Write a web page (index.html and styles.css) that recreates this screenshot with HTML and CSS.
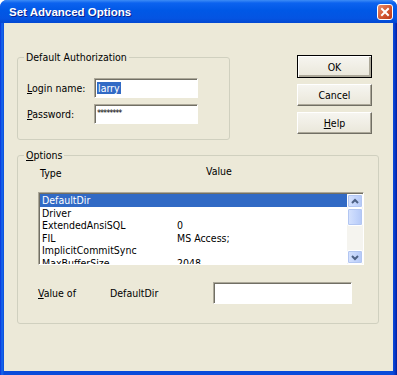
FILE: index.html
```html
<!DOCTYPE html>
<html lang="en">
<head>
  <meta charset="UTF-8" />
  <title>Set Advanced Options</title>
  <link rel="stylesheet" href="styles.css">
</head>
<body>
  <div class="window">
    <div class="titlebar">
      <span class="title">Set Advanced Options</span>
      <span class="close">
        <svg width="14" height="14" viewBox="0 0 14 14">
          <path d="M4 4 L10 10 M10 4 L4 10" stroke="#fff" stroke-width="2" stroke-linecap="square" fill="none"/>
        </svg>
      </span>
    </div>

    <div class="client">
      <div class="top">
        <fieldset class="group auth">
          <legend>Default Authorization</legend>
          <div class="group-body">
            <div class="field">
              <label><u>L</u>ogin name:</label>
              <span class="edit"><span class="sel">larry</span></span>
            </div>
            <div class="field">
              <label><u>P</u>assword:</label>
              <span class="edit mask">********</span>
            </div>
          </div>
        </fieldset>

        <div class="buttons">
          <button class="btn default">OK</button>
          <button class="btn">Cancel</button>
          <button class="btn"><u>H</u>elp</button>
        </div>
      </div>

      <fieldset class="group options">
        <legend><u>O</u>ptions</legend>
        <div class="group-body">
          <div class="cols">
            <span class="col-type">Type</span>
            <span class="col-value">Value</span>
          </div>

          <div class="list">
            <div class="rows">
              <div class="row selected"><span class="c1">DefaultDir</span><span></span></div>
              <div class="row"><span class="c1">Driver</span><span></span></div>
              <div class="row"><span class="c1">ExtendedAnsiSQL</span><span>0</span></div>
              <div class="row"><span class="c1">FIL</span><span>MS Access;</span></div>
              <div class="row"><span class="c1">ImplicitCommitSync</span><span></span></div>
              <div class="row"><span class="c1">MaxBufferSize</span><span>2048</span></div>
            </div>
            <div class="scrollbar">
              <span class="sb-btn">
                <svg width="14" height="13" viewBox="0 0 14 13"><path d="M4 8 L7 5 L10 8" stroke="#4D6185" stroke-width="2" fill="none"/></svg>
              </span>
              <span class="sb-thumb"></span>
              <span class="sb-track"></span>
              <span class="sb-btn">
                <svg width="14" height="13" viewBox="0 0 14 13"><path d="M4 5 L7 8 L10 5" stroke="#4D6185" stroke-width="2" fill="none"/></svg>
              </span>
            </div>
          </div>

          <div class="valueof">
            <label class="vo-label"><u>V</u>alue of</label>
            <span class="vo-name">DefaultDir</span>
            <span class="edit vo-edit"></span>
          </div>
        </div>
      </fieldset>
    </div>
  </div>
</body>
</html>
```

FILE: styles.css
```css
* {
  margin: 0;
  padding: 0;
  box-sizing: border-box;
}

body {
  font-family: "DejaVu Sans Condensed", "Liberation Sans", sans-serif;
  font-size: 10.5px;
  color: #000;
  background: #fff;
}

.window {
  width: 397px;
  height: 375px;
  display: flex;
  flex-direction: column;
  background: linear-gradient(to right, #0831D9 0, #166AEE 2px, #0A4BDA 4px, #0A4BDA 393px, #0838C8 395px, #001EA0 397px);
  border-radius: 7px 7px 0 0;
  overflow: hidden;
}

.titlebar {
  height: 23px;
  display: flex;
  align-items: center;
  justify-content: space-between;
  padding: 0 4px 0 9px;
  background: linear-gradient(#3D8CF6 0, #0C63EF 3px, #0058E6 45%, #0454E2 80%, #0348D2 100%);
}

.title {
  color: #fff;
  font-family: "Liberation Sans", sans-serif;
  font-weight: bold;
  font-size: 11.5px;
  text-shadow: 1px 1px #0A1E8C;
}

.close {
  width: 16px;
  height: 16px;
  display: flex;
  align-items: center;
  justify-content: center;
  border: 1px solid #fff;
  border-radius: 3px;
  background: linear-gradient(135deg, #E98D6D, #D2552F 55%, #B8381A);
}

.client {
  flex: 1;
  margin: 0 4px 4px;
  padding-left: 13px;
  background: #ECE9D8;
}

.top {
  display: flex;
  align-items: flex-start;
}

.group {
  border: 1px solid #D0D0BF;
  border-radius: 3px;
  padding: 0;
}

.group legend {
  margin-left: 6px;
  padding: 0 2px;
  line-height: 13px;
}

.auth {
  margin-top: 28px;
  width: 213px;
  height: 89px;
}

.auth .group-body {
  padding: 14px 9px 0;
  display: flex;
  flex-direction: column;
  gap: 6px;
}

.field {
  display: flex;
  align-items: center;
}

.field label {
  width: 67px;
}

.edit {
  display: block;
  background: #fff;
  border: 1px solid;
  border-color: #ACA899 #fff #fff #ACA899;
  box-shadow: inset 1px 1px #716F64;
}

.field .edit {
  width: 104px;
  height: 20px;
  padding: 2px 0 0 2px;
  line-height: 14px;
}

.sel {
  background: #316AC5;
  color: #fff;
  padding: 0 1px;
}

.field .mask {
  font-size: 9px;
  letter-spacing: -1px;
  padding-top: 1px;
}

.buttons {
  margin: 32px 0 0 67px;
  display: flex;
  flex-direction: column;
  gap: 6px;
}

.btn {
  width: 75px;
  height: 22px;
  font-family: inherit;
  font-size: 10.5px;
  color: #000;
  background: linear-gradient(#F6F5F0, #EAE7DA);
  border: 1px solid;
  border-color: #fff #716F64 #716F64 #fff;
  box-shadow: inset -1px -1px #ACA899;
}

.btn.default {
  height: 23px;
  border-color: #000;
  box-shadow: inset 1px 1px #fff, inset -2px -2px #ACA899;
}

.options {
  margin-top: 9px;
  width: 362px;
  height: 175px;
}

.options .group-body {
  padding: 5px 14px 0 20px;
}

.cols {
  display: flex;
  height: 13px;
  line-height: 13px;
}

.col-type {
  width: 168px;
  padding-left: 2px;
}

.col-value {
  margin-top: -2px;
}

.list {
  margin-top: 12px;
  width: 326px;
  height: 73px;
  display: flex;
  background: #fff;
  border: 1px solid;
  border-color: #ACA899 #fff #fff #ACA899;
  box-shadow: inset 1px 1px #716F64;
  padding: 1px 0 0 1px;
}

.rows {
  flex: 1;
  overflow: hidden;
}

.row {
  display: flex;
  height: 12.5px;
  line-height: 12.5px;
  white-space: nowrap;
}

.row .c1 {
  width: 137px;
  padding-left: 2px;
}

.row.selected {
  background: #316AC5;
  color: #fff;
}

.scrollbar {
  width: 16px;
  display: flex;
  flex-direction: column;
  background: #F5F4EF;
}

.sb-btn,
.sb-thumb {
  display: flex;
  align-items: center;
  justify-content: center;
  border: 1px solid #fff;
  border-radius: 2px;
  background: linear-gradient(to right, #D6E2FD, #C1D3FB 60%, #B4C8F6);
  box-shadow: inset 0 0 0 1px #B2C6F2;
}

.sb-btn {
  height: 14px;
}

.sb-thumb {
  height: 18px;
}

.sb-track {
  flex: 1;
}

.valueof {
  display: flex;
  align-items: center;
  margin-top: 17px;
}

.vo-label {
  width: 72px;
}

.vo-name {
  width: 103px;
}

.vo-edit {
  width: 139px;
  height: 22px;
}
```
